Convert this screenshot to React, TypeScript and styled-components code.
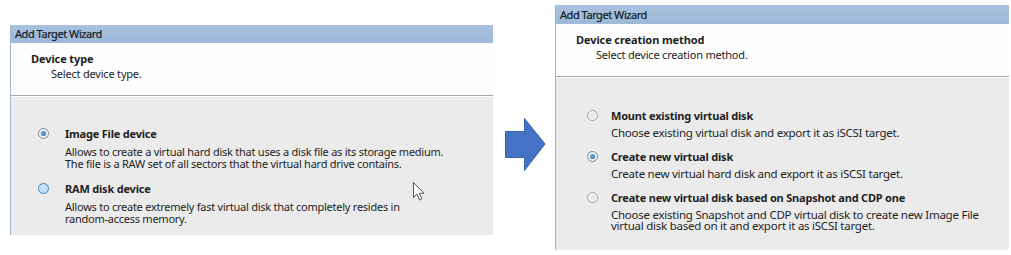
import React from "react";
import styled, { createGlobalStyle } from "styled-components";

const Global = createGlobalStyle`
  html, body { margin: 0; padding: 0; background: #ffffff; }
  body { font-family: "Noto Sans", "Open Sans", sans-serif; color: #1e1e1e; }
`;

const Page = styled.div`
  width: 1011px;
  height: 255px;
  display: flex;
  align-items: flex-start;
  overflow: hidden;
`;

const Panel = styled.div<{ $top: number; $left: number; $width: number; $height: number }>`
  margin-top: ${(p) => p.$top}px;
  margin-left: ${(p) => p.$left}px;
  width: ${(p) => p.$width}px;
  height: ${(p) => p.$height}px;
  display: flex;
  flex-direction: column;
  border-left: 1px solid #9fb6d2;
  box-sizing: border-box;
  position: relative;
`;

const TitleBar = styled.div<{ $h: number }>`
  height: ${(p) => p.$h}px;
  background: linear-gradient(#a9c2df, #9db8d8);
  font-size: 11px;
  line-height: ${(p) => p.$h}px;
  padding-left: 4px;
  color: #111a26;
  letter-spacing: -0.45px;
  -webkit-text-stroke: 0.2px #111a26;
`;

const Header = styled.div<{ $h: number }>`
  height: ${(p) => p.$h}px;
  background: #fdfdfd;
  padding: 8px 0 0 20px;
  box-sizing: border-box;
  border-bottom: 1px solid #a7a7a7;
  box-shadow: 0 1px 0 #ffffff;
`;

const Heading = styled.div`
  font-size: 11px;
  font-weight: 700;
  line-height: 16px;
  letter-spacing: -0.1px;
`;

const SubHeading = styled.div`
  font-size: 11px;
  line-height: 13px;
  padding-left: 20px;
  letter-spacing: -0.2px;
`;

const Content = styled.div<{ $pt: number; $pl: number }>`
  flex: 1;
  background: #ebebeb;
  margin-top: 1px;
  padding: ${(p) => p.$pt}px 0 0 ${(p) => p.$pl}px;
  display: flex;
  flex-direction: column;
  gap: 10px;
`;

const Option = styled.div`
  display: flex;
  flex-direction: column;
`;

const OptionRow = styled.div<{ $gap: number }>`
  display: flex;
  align-items: center;
  height: 16px;
  gap: ${(p) => p.$gap}px;
`;

const Radio = styled.span<{ $checked?: boolean; $hover?: boolean }>`
  width: 11px;
  height: 11px;
  border-radius: 50%;
  box-sizing: border-box;
  border: 1px solid ${(p) => (p.$hover ? "#3c7fb1" : p.$checked ? "#7d8a99" : "#a2a2a2")};
  background: ${(p) =>
    p.$hover
      ? "radial-gradient(circle at 50% 50%, #c4e4f7 0%, #bfe0f5 55%, #e8f4fc 100%)"
      : "radial-gradient(circle at 50% 50%, #e2e2e2 0%, #f2f2f2 60%, #ffffff 100%)"};
  display: flex;
  align-items: center;
  justify-content: center;
  flex: none;
  &::after {
    content: "";
    display: ${(p) => (p.$checked ? "block" : "none")};
    width: 5px;
    height: 5px;
    border-radius: 50%;
    background: radial-gradient(circle at 40% 35%, #6ab0e8, #1a5c9e);
  }
`;

const Label = styled.span`
  font-size: 11px;
  font-weight: 700;
  letter-spacing: -0.2px;
`;

const Desc = styled.div<{ $indent: number; $size: number; $lh: number; $mt: number }>`
  margin-top: ${(p) => p.$mt}px;
  padding-left: ${(p) => p.$indent}px;
  font-size: ${(p) => p.$size}px;
  line-height: ${(p) => p.$lh}px;
  letter-spacing: -0.25px;
  color: #1e1e1e;
  white-space: nowrap;
`;

const ArrowWrap = styled.div`
  margin-top: 118px;
  margin-left: 12px;
  width: 41px;
  height: 54px;
  flex: none;
`;

const Cursor = styled.svg`
  position: absolute;
  left: 402px;
  top: 157px;
`;

type Opt = { label: string; desc: string[]; checked?: boolean; hover?: boolean };

type Metrics = { gap: number; size: number; lh: number; mt: number };

const leftOpts: Opt[] = [
  {
    label: "Image File device",
    desc: [
      "Allows to create a virtual hard disk that uses a disk file as its storage medium.",
      "The file is a RAW set of all sectors that the virtual hard drive contains.",
    ],
    checked: true,
  },
  {
    label: "RAM disk device",
    desc: ["Allows to create extremely fast virtual disk that completely resides in", "random-access memory."],
    hover: true,
  },
];

const rightOpts: Opt[] = [
  { label: "Mount existing virtual disk", desc: ["Choose existing virtual disk and export it as iSCSI target."] },
  { label: "Create new virtual disk", desc: ["Create new virtual hard disk and export it as iSCSI target."], checked: true },
  {
    label: "Create new virtual disk based on Snapshot and CDP one",
    desc: [
      "Choose existing Snapshot and CDP virtual disk to create new Image File",
      "virtual disk based on it and export it as iSCSI target.",
    ],
  },
];

const Options: React.FC<{ opts: Opt[]; m: Metrics }> = ({ opts, m }) => (
  <>
    {opts.map((o) => (
      <Option key={o.label}>
        <OptionRow $gap={m.gap}>
          <Radio $checked={o.checked} $hover={o.hover} />
          <Label>{o.label}</Label>
        </OptionRow>
        <Desc $indent={11 + m.gap} $size={m.size} $lh={m.lh} $mt={m.mt}>
          {o.desc.map((d) => (
            <div key={d}>{d}</div>
          ))}
        </Desc>
      </Option>
    ))}
  </>
);

export default function App() {
  return (
    <>
      <Global />
      <Page>
        <Panel $top={25} $left={10} $width={483} $height={210}>
          <TitleBar $h={18}>Add Target Wizard</TitleBar>
          <Header $h={53}>
            <Heading>Device type</Heading>
            <SubHeading>Select device type.</SubHeading>
          </Header>
          <Content $pt={28} $pl={27}>
            <Options opts={leftOpts} m={{ gap: 16, size: 11, lh: 12, mt: 5 }} />
          </Content>
          <Cursor width="12" height="19" viewBox="0 0 12 19">
            <path d="M0.5 0.5 L0.5 15.5 L4 12 L6.5 18 L8.8 17 L6.3 11.3 L11 11.3 Z" fill="#ffffff" stroke="#555" strokeWidth="1" />
          </Cursor>
        </Panel>
        <ArrowWrap>
          <svg width="41" height="54" viewBox="0 0 41 54">
            <path d="M0.5 13.5 H19.5 V0.5 L40 26 L19.5 52.5 V39.5 H0.5 Z" fill="#4472c4" stroke="#3a63ad" strokeWidth="1" />
          </svg>
        </ArrowWrap>
        <Panel $top={5} $left={9} $width={454} $height={245}>
          <TitleBar $h={19}>Add Target Wizard</TitleBar>
          <Header $h={53}>
            <Heading>Device creation method</Heading>
            <SubHeading>Select device creation method.</SubHeading>
          </Header>
          <Content $pt={29} $pl={31}>
            <Options opts={rightOpts} m={{ gap: 13, size: 11.5, lh: 11, mt: 4 }} />
          </Content>
        </Panel>
      </Page>
    </>
  );
}
